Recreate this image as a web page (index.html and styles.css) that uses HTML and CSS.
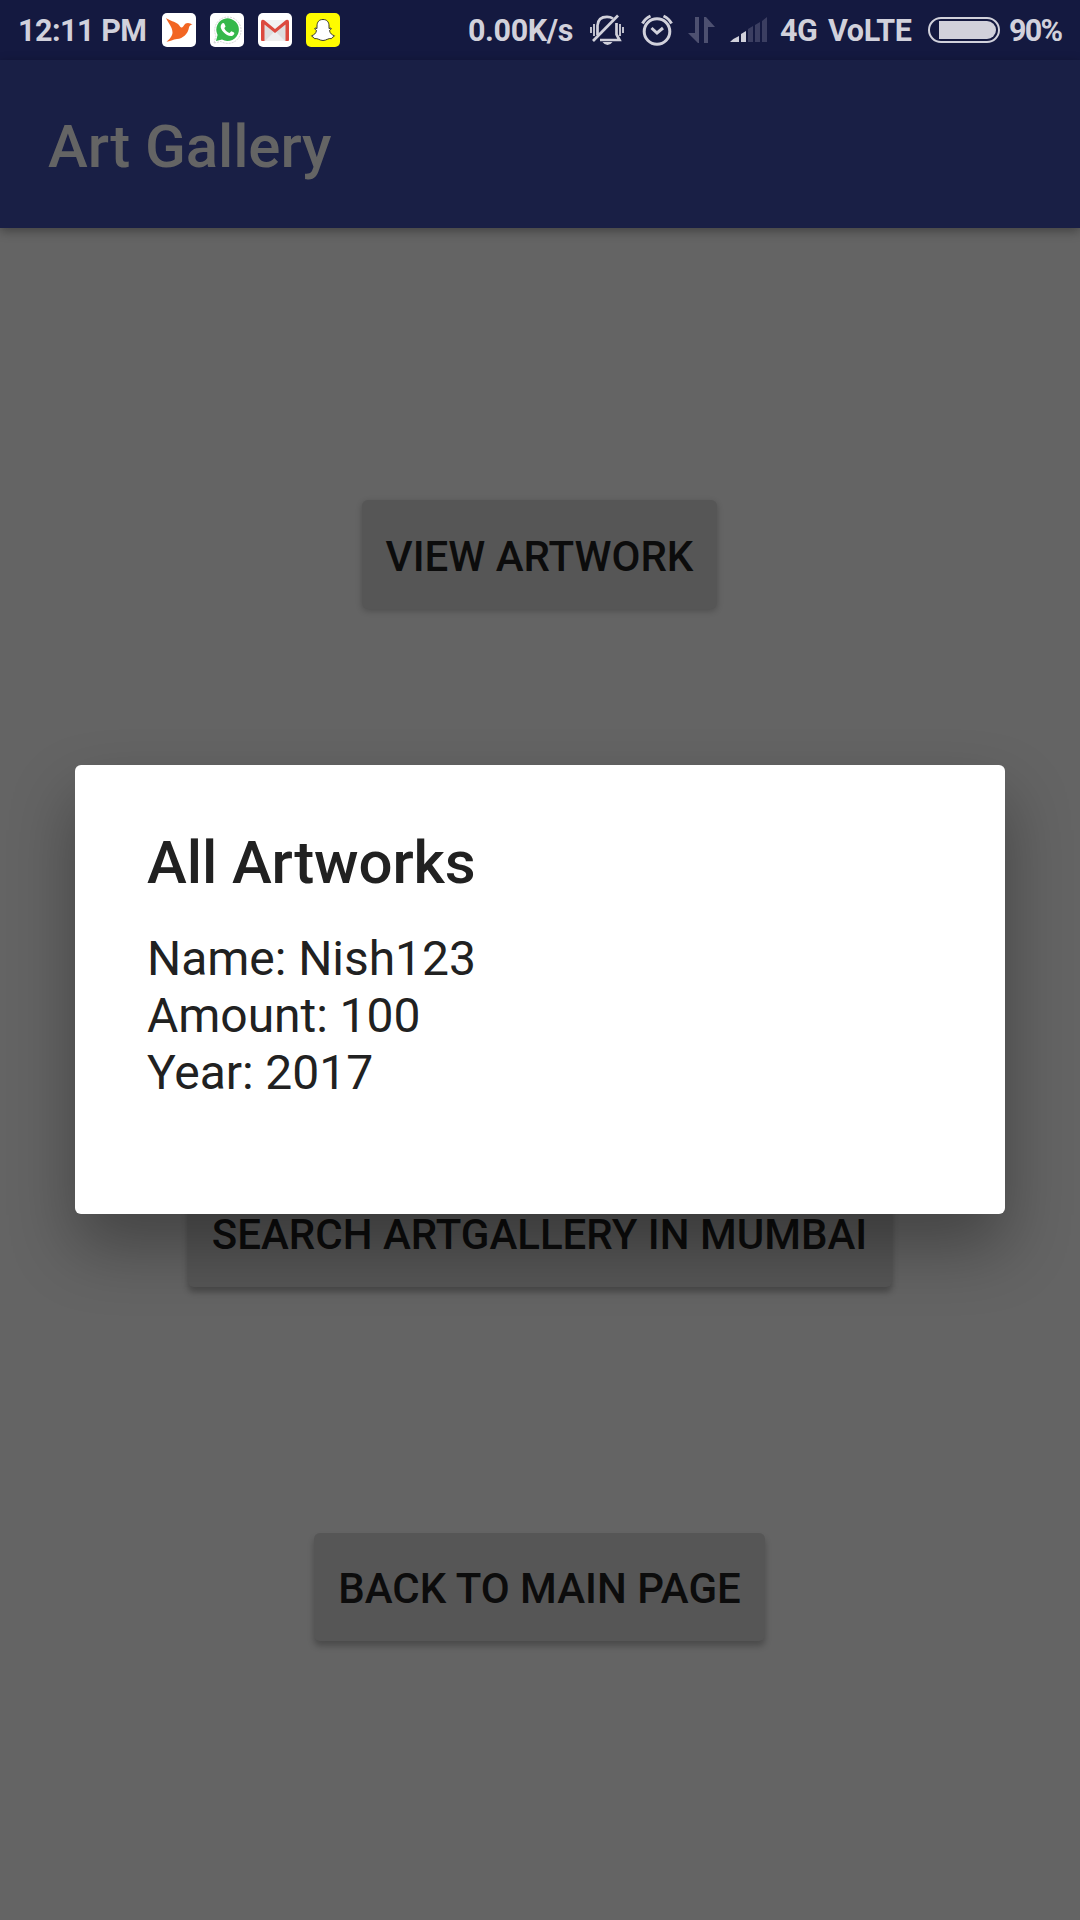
FILE: index.html
```html
<!DOCTYPE html>
<html lang="en">
<head>
<meta charset="utf-8">
<title>Art Gallery</title>
<link rel="stylesheet" href="styles.css">
</head>
<body>
<div class="screen">
  <header class="status">
    <span class="clock">12:11 PM</span>
    <div class="apps">
      <svg class="app" viewBox="0 0 34 34"><rect width="34" height="34" rx="5" fill="#fff"/><path d="M4 5C8 8 13 8.500 16 11C18 13 18.500 15 20 14.500C22 13.500 22 10 26 10C27.500 10 29 11 30.500 11.200C28.500 12 27.500 12.500 27 14.500C26 21 21 25.500 15 26C11 26.300 8 28.500 4.500 28.700C7.500 26.500 10.500 23 10.500 19.500C10.500 14 6 10 4 5Z" fill="#f26522"/></svg>
      <svg class="app" viewBox="0 0 34 34"><rect width="34" height="34" rx="5" fill="#fff"/><path d="M4 30L6 23A13.200 13.200 0 1 1 11 28.500Z" fill="#fff" stroke="#ccc" stroke-width=".8" stroke-dasharray="2 1"/><path d="M6 28L7.600 22A11.300 11.300 0 1 1 12 26.500Z" fill="#35b84b"/><path d="M12 10.500C13 9.500 14.200 10 14.500 11L15.500 13.300C15.600 14 14.500 14.700 14.300 15.300C15.500 17.700 17.200 19.200 19.500 20C20.300 19.700 20.800 18.300 21.500 18.300L24 19.500C25 20.300 23.800 22.500 22 23C16.500 24 10 16.500 10.700 13Q11 11.500 12 10.500Z" fill="#fff"/></svg>
      <svg class="app" viewBox="0 0 34 34"><rect width="34" height="34" rx="5" fill="#fff"/><path d="M4 7H30V28H4Z" fill="#dedede"/><path d="M7 28L17 18L27 28Z" fill="#eee"/><path d="M5 7L17 17L29 7Z" fill="#f2f2f2"/><path d="M3 27V9Q3 6 6 7L17 16L28 7Q31 6 31 9V27Q31 28 30 28H27.500V11.500L17 20L6.500 11.500V28H4Q3 28 3 27Z" fill="#dc4a3e"/></svg>
      <svg class="app" viewBox="0 0 34 34"><rect width="34" height="34" rx="5" fill="#fffc00"/><path d="M17 6.500C21 6.500 23 9 23 13V15.500L25 15C26 16 24 17 23.500 17.500C24 20.500 26 22 28.500 22.800C28 24 26 24 25.600 25.600C22 25 20.500 27.500 17 27.500C13.500 27.500 12 25 8.400 25.600C8 24 6 24 5.500 22.800C8 22 10 20.500 10.500 17.500C10 17 8 16 9 15L11 15.500V13C11 9 13 6.500 17 6.500Z" fill="#fff" stroke="#222" stroke-width=".9"/></svg>
    </div>
    <div class="indicators">
      <span class="speed">0.00K/s</span>
      <svg class="bell" viewBox="0 0 34 34" fill="none" stroke="#d1d1db" stroke-width="2.700"><path d="M1 14V20M4 11V23M33 14V20M30 11V23" stroke-width="1.800"/><path d="M7.500 22V12.500Q8 3.800 17 3.800Q20.500 3.800 23 5.500M26.500 10V21.500L29.500 27H10"/><path d="M3 28L28 2.500"/><path d="M12.500 29H22.500Q20.500 32 17.500 32T12.500 29Z" fill="#d1d1db" stroke="none"/></svg>
      <svg class="alarm" viewBox="0 0 34 34" fill="none" stroke="#d1d1db" stroke-width="3"><circle cx="17" cy="18.500" r="12.800"/><path d="M11.500 15L17 20L23 15M2.500 10.500Q5 5.500 10.500 3M31.500 10.500Q29 5.500 23.500 3"/></svg>
      <svg class="data" viewBox="0 0 28 28" fill="#4d5070"><path d="M7 1H11V27H10L0 17H7ZM16 27V1H18L27 11H20V27Z"/></svg>
      <svg class="signal" viewBox="0 0 38 26"><path d="M0 25Q4 21 9 19V25Z" fill="#d1d1db"/><path d="M11 25V17L16 14V25Z" fill="#d1d1db"/><path d="M18 25V12L23 9V25ZM25 25V8L30 5V25ZM32 25V4L37 0V25Z" fill="#3b3e61"/></svg>
      <span class="network">4G</span>
      <span class="volte">VoLTE</span>
      <svg class="battery" viewBox="0 0 72 26"><rect x="1" y="1" width="70" height="24" rx="12" fill="none" stroke="#d1d1db" stroke-width="2"/><path d="M11 4H59A9 9 0 0 1 59 22H11Z" fill="#d1d1db"/></svg>
      <span class="percent">90%</span>
    </div>
  </header>
  <div class="appbar"><h1>Art Gallery</h1></div>
  <main class="content">
    <button class="btn view">VIEW ARTWORK</button>
    <button class="btn search">SEARCH ARTGALLERY IN MUMBAI</button>
    <button class="btn back">BACK TO MAIN PAGE</button>
  </main>
  <div class="overlay">
    <section class="dialog">
      <h2>All Artworks</h2>
      <p>Name: Nish123<br>Amount: 100<br>Year: 2017</p>
    </section>
  </div>
</div>
</body>
</html>
```

FILE: styles.css
```css
* { box-sizing: border-box; }
body { margin: 0; font-family: Roboto, "Noto Sans", sans-serif; }
h1, h2, p { margin: 0; }
.screen { position: relative; width: 1080px; height: 1920px; display: flex; flex-direction: column; overflow: hidden; background: #646464; }
.status { height: 60px; flex: none; display: flex; align-items: center; padding: 0 19px 0 18px; background: #141940; color: #d1d1db; font-size: 30.5px; font-weight: 700; line-height: 36px; white-space: nowrap; }
.status svg { display: block; flex: none; }
.status span { padding-top: 2px; letter-spacing: -.4px; }
.status .clock { width: 144px; letter-spacing: -.5px; }
.apps { display: flex; gap: 14px; }
.app { width: 34px; height: 34px; }
.indicators { display: flex; align-items: center; margin-left: auto; }
.speed { width: 122px; }
.bell { width: 34px; height: 34px; }
.alarm { width: 34px; height: 34px; margin-left: 16px; }
.data { width: 28px; height: 28px; margin-left: 14px; }
.signal { width: 38px; height: 26px; margin-left: 14px; }
.network { width: 48px; margin-left: 12px; }
.volte { width: 100px; }
.battery { width: 72px; height: 26px; }
.status .percent { width: 52px; margin-left: 9px; letter-spacing: -1.8px; }
.appbar { position: relative; height: 168px; flex: none; display: flex; align-items: center; padding: 6px 48px 0; background: #191f45; color: #646464; box-shadow: 0 3px 10px rgba(0,0,0,.35); }
h1 { font-size: 60px; font-weight: 500; line-height: 70px; letter-spacing: -.1px; }
.content { flex: 1; display: flex; flex-direction: column; align-items: center; padding: 272px 1px 0 0; }
.btn { height: 109px; padding: 3px 0 0; border: 0; border-radius: 6px; background: #565656; color: #0c0c0c; font: 500 42px/49px Roboto, sans-serif; white-space: nowrap; }
.view { width: 355px; box-shadow: 0 2px 6px rgba(0,0,0,.22); }
.search { width: 704px; margin-top: 569px; box-shadow: 0 5px 6px rgba(0,0,0,.28); }
.back { width: 451px; height: 108px; margin-top: 246px; box-shadow: 0 5px 6px rgba(0,0,0,.25); }
.overlay { position: absolute; inset: 0; padding: 765px 75px 0; }
.dialog { height: 449px; padding: 63px 72px; border-radius: 6px; background: #fff; color: #212121; box-shadow: 0 33px 66px rgba(0,0,0,.33); }
h2 { font-size: 60px; font-weight: 500; line-height: 70px; letter-spacing: -.1px; }
p { margin-top: 32px; font-size: 48px; line-height: 57px; letter-spacing: -.05px; }
```
